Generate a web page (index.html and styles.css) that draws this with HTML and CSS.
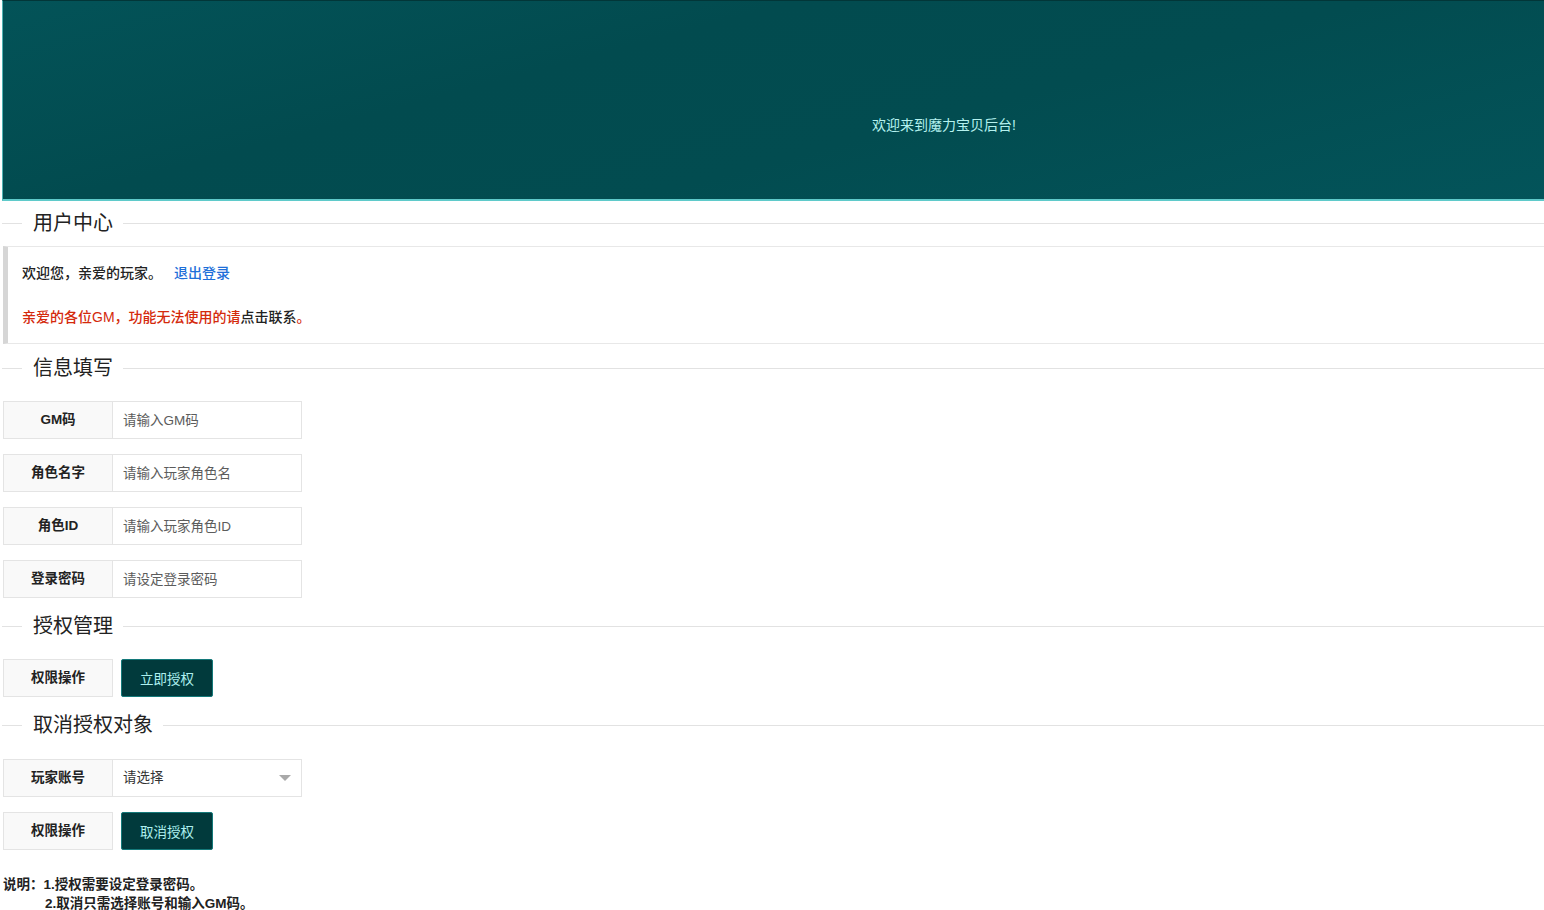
FILE: index.html
```html
<!DOCTYPE html>
<html lang="zh-CN">
<head>
<meta charset="UTF-8">
<meta name="viewport" content="width=device-width, initial-scale=1.0">
<title>魔力宝贝后台</title>
<link rel="stylesheet" href="styles.css">
</head>
<body>
<div class="header">
    <span class="welcome">欢迎来到魔力宝贝后台!</span>
</div>

<div class="field-title title-user"><span>用户中心</span></div>
<div class="quote">
    <p>欢迎您，亲爱的玩家。 <a href="#" class="logout">退出登录</a></p>
    <p class="notice"><span class="red">亲爱的各位GM，功能无法使用的请</span>点击联系<span class="red">。</span></p>
</div>

<div class="field-title title-info"><span>信息填写</span></div>
<div class="form-block">
    <div class="form-item">
        <label class="form-label">GM码</label>
        <input class="form-input" type="text" placeholder="请输入GM码">
    </div>
    <div class="form-item">
        <label class="form-label">角色名字</label>
        <input class="form-input" type="text" placeholder="请输入玩家角色名">
    </div>
    <div class="form-item">
        <label class="form-label">角色ID</label>
        <input class="form-input" type="text" placeholder="请输入玩家角色ID">
    </div>
    <div class="form-item">
        <label class="form-label">登录密码</label>
        <input class="form-input" type="password" placeholder="请设定登录密码">
    </div>
</div>

<div class="field-title title-auth"><span>授权管理</span></div>
<div class="form-block">
    <div class="form-item">
        <label class="form-label">权限操作</label>
        <button class="btn">立即授权</button>
    </div>
</div>

<div class="field-title title-cancel"><span>取消授权对象</span></div>
<div class="form-block block-cancel">
    <div class="form-item">
        <label class="form-label">玩家账号</label>
        <div class="select">
            <span class="select-text">请选择</span>
            <i class="arrow"></i>
        </div>
    </div>
    <div class="form-item">
        <label class="form-label">权限操作</label>
        <button class="btn">取消授权</button>
    </div>
</div>

<div class="note">
    <div>说明：1.授权需要设定登录密码。</div>
    <div class="note-indent">2.取消只需选择账号和输入GM码。</div>
</div>
</body>
</html>
```

FILE: styles.css
```css
body {
    margin: 0 0 0 2px;
    font-family: "Liberation Sans", "Noto Sans CJK SC", sans-serif;
    font-size: 14px;
    color: #222;
    background: #fff;
}

.header {
    box-sizing: border-box;
    height: 201px;
    border-top: 1px solid #023638;
    border-left: 1px solid #4fb3b3;
    border-bottom: 2px solid #5fcaca;
    background: linear-gradient(165deg, #035358 0%, #024b4f 35%, #024c50 60%, #03545a 100%);
    padding: 113px 0 0 869px;
}

.welcome {
    color: #b5f2ef;
    font-size: 14px;
}

.field-title {
    display: flex;
    align-items: center;
    height: 30px;
    font-size: 20px;
    color: #222;
}

.field-title::before {
    content: "";
    width: 20px;
    border-top: 1px solid #e2e2e2;
}

.field-title::after {
    content: "";
    flex: 1;
    border-top: 1px solid #e2e2e2;
}

.field-title span {
    padding: 0 10px 0 11px;
    line-height: 30px;
}

.title-user { margin-top: 7px; }
.title-info { margin-top: 9px; }
.title-auth { margin-top: 13px; }
.title-cancel { margin-top: 13px; }

.quote {
    margin-top: 8px;
    margin-left: 1px;
    height: 98px;
    box-sizing: border-box;
    border: 1px solid #e8e8e8;
    border-left: 5px solid #d6d6d6;
    border-right: none;
    padding: 15px 14px;
}

.quote p {
    margin: 0;
    line-height: 22px;
    font-weight: 500;
    font-size: 14px;
}

.quote .notice {
    margin-top: 22px;
}

.logout {
    color: #1e6fd9;
    text-decoration: none;
    margin-left: 8px;
}

.red {
    color: #d42a0c;
}

.form-block {
    margin-top: 18px;
    margin-left: 1px;
}

.block-cancel {
    margin-top: 19px;
}

.form-item {
    display: flex;
    height: 38px;
    margin-bottom: 15px;
}

.form-item:last-child {
    margin-bottom: 0;
}

.form-label {
    width: 110px;
    box-sizing: border-box;
    border: 1px solid #e4e4e4;
    background: #f9f9f9;
    text-align: center;
    line-height: 36px;
    font-weight: 600;
    font-size: 13.5px;
    color: #222;
}

.form-input {
    width: 189px;
    box-sizing: border-box;
    border: 1px solid #e4e4e4;
    border-left: none;
    padding: 0 10px;
    font-family: inherit;
    font-size: 13.5px;
    color: #333;
    outline: none;
}

.form-input::placeholder {
    color: #5c5c5c;
}

.btn {
    margin-left: 8px;
    width: 92px;
    height: 38px;
    border: 1px solid #14797a;
    border-radius: 2px;
    background: #013a3c;
    color: #aef0ef;
    font-family: inherit;
    font-size: 13.5px;
    cursor: pointer;
}

.select {
    position: relative;
    width: 189px;
    box-sizing: border-box;
    border: 1px solid #e4e4e4;
    border-left: none;
    padding: 0 10px;
    line-height: 36px;
    font-size: 13.5px;
    color: #333;
}

.arrow {
    position: absolute;
    right: 10px;
    top: 15px;
    border: 6px solid transparent;
    border-top: 6px solid #a9a9a9;
    border-bottom: none;
}

.note {
    margin: 25px 0 0 1px;
    font-weight: 600;
    font-size: 13.5px;
    line-height: 19px;
}

.note-indent {
    padding-left: 42px;
}
```
